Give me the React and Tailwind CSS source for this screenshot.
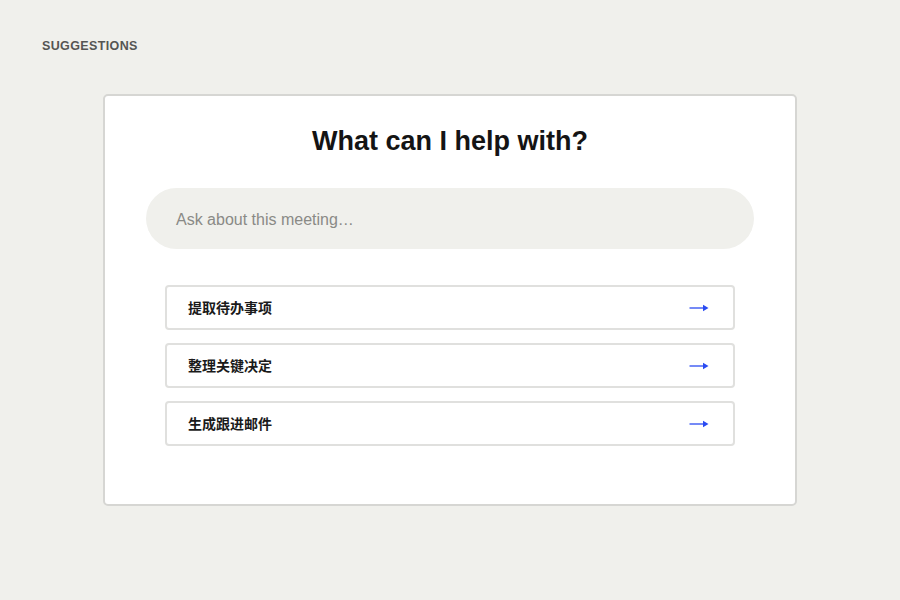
const suggestions = ["提取待办事项", "整理关键决定", "生成跟进邮件"];

function Arrow() {
  return (
    <svg width="20" height="10" viewBox="0 0 20 10" className="text-[#2a4bf2]">
      <path d="M0.5 5H17" stroke="currentColor" strokeWidth="1.3" />
      <path d="M14 1.8L19.5 5L14 8.2Z" fill="currentColor" />
    </svg>
  );
}

export default function App() {
  return (
    <div
      className="min-h-screen w-full bg-[#f0f0ec] px-[42px] pt-[39px]"
      style={{ fontFamily: "'Liberation Sans', Arial, 'Noto Sans CJK SC', sans-serif" }}
    >
      <p className="text-[12.5px] font-bold tracking-[0.03em] text-[#555553] leading-[15px]">SUGGESTIONS</p>

      <div className="mx-auto mt-[40px] w-[694px] rounded-[5px] border-2 border-[#d6d6d3] bg-white px-[41px] pb-[58px] pt-[29px]">
        <h1 className="text-center text-[27px] font-bold leading-[33px] text-[#141414]">
          What can I help with?
        </h1>

        <div className="mt-[30px] flex h-[61px] items-center rounded-full bg-[#f0f0ec] px-[30px] pt-[3px]">
          <span className="text-[16px] text-[#8a8a86]">Ask about this meeting…</span>
        </div>

        <div className="mx-[19px] mt-[36px] flex flex-col gap-[13px]">
          {suggestions.map((s) => (
            <div
              key={s}
              className="flex h-[45px] items-center justify-between rounded-[4px] border-2 border-[#e0e0de] bg-white pl-[21px] pr-[24px] pt-[1px]"
            >
              <span className="text-[14px] font-bold text-[#1a1a1a]">{s}</span>
              <Arrow />
            </div>
          ))}
        </div>
      </div>
    </div>
  );
}
